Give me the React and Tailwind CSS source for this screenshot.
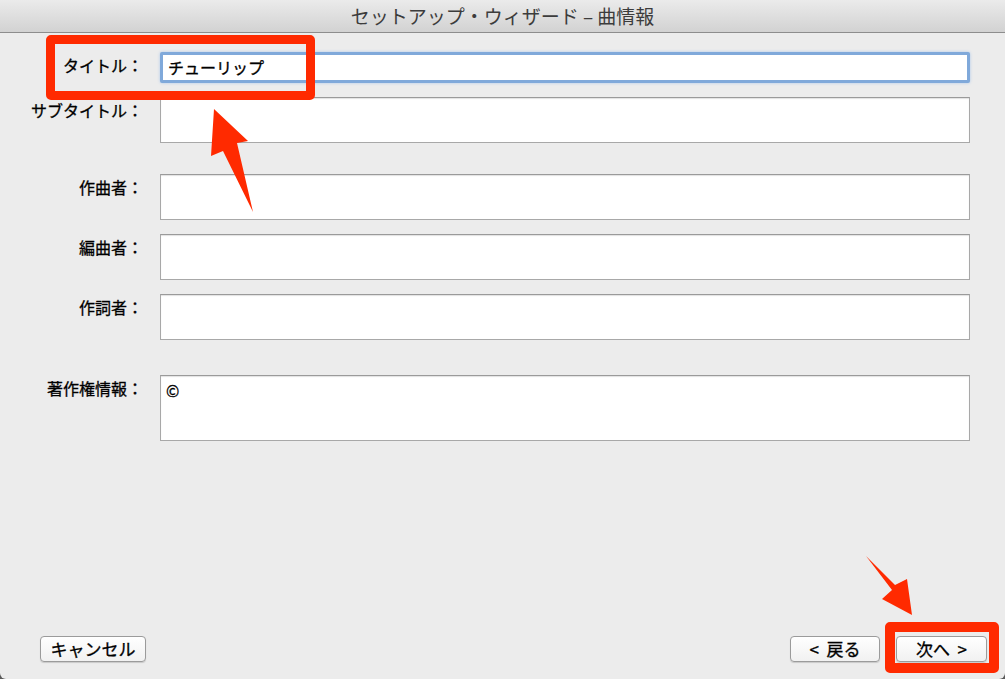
import React from "react";

const FONT = { fontFamily: '"Noto Sans CJK JP", "Noto Sans", sans-serif' };

const FIELDS = [
  { label: "タイトル：", value: "チューリップ", h: "h-[31px]", mt: "mt-[19px]", focused: true },
  { label: "サブタイトル：", value: "", h: "h-[46px]", mt: "mt-[14px]" },
  { label: "作曲者：", value: "", h: "h-[46px]", mt: "mt-[31px]" },
  { label: "編曲者：", value: "", h: "h-[46px]", mt: "mt-[14px]" },
  { label: "作詞者：", value: "", h: "h-[46px]", mt: "mt-[14px]" },
  { label: "著作権情報：", value: "©", h: "h-[66px]", mt: "mt-[35px]" },
];

function Field({ label, value, h, mt, focused }) {
  return (
    <div className={`flex items-start ${mt}`}>
      <div className="w-[143px] shrink-0 pt-[2px] text-right text-[16px] leading-[22px] text-black [-webkit-text-stroke:0.3px_black]">{label}</div>
      <div
        className={`ml-[17px] w-[810px] ${h} bg-white px-[5px] text-[16px] leading-[22px] text-black [-webkit-text-stroke:0.3px_black] ${
          focused
            ? "border-[3px] border-[#80a9da] rounded-[2px] pt-[1px] shadow-[0_0_3px_#a9c7ea]"
            : "border border-[#a8a8a8] border-t-[#9a9a9a] pt-[3px] shadow-[inset_0_1px_1px_rgba(0,0,0,0.12)]"
        }`}
      >
        {value}
      </div>
    </div>
  );
}

function Button({ children, w }) {
  return (
    <button
      type="button"
      className={`${w} h-[26px] rounded-[4px] border border-[#9b9b9b] bg-gradient-to-b from-white to-[#f1f1f1] text-[17px] leading-[22px] text-black [-webkit-text-stroke:0.3px_black] shadow-[0_1px_1px_rgba(0,0,0,0.15)]`}
    >
      {children}
    </button>
  );
}

export default function App() {
  return (
    <div className="h-[679px] w-[1005px] overflow-hidden bg-[#5a5a5a]" style={FONT}>
      <div className="relative flex h-full flex-col rounded-b-[6px] bg-[#ececec]">
        <div className="flex h-[33px] shrink-0 items-center justify-center border-b border-[#8d8d8d] bg-gradient-to-b from-[#ebebeb] to-[#d2d2d2] text-[19px] text-[#3c3c3c]">
          セットアップ・ウィザード – 曲情報
        </div>

        <div className="flex flex-col">
          {FIELDS.map((f) => (
            <Field key={f.label} {...f} />
          ))}
        </div>

        <div className="mt-auto mb-[17px] flex items-center pl-[40px] pr-[18px]">
          <Button w="w-[106px]">キャンセル</Button>
          <div className="ml-auto flex gap-[16px]">
            <Button w="w-[90px]">&lt;&nbsp;&nbsp;戻る</Button>
            <Button w="w-[91px]">次へ&nbsp;&nbsp;&gt;</Button>
          </div>
        </div>

        {/* annotation overlays */}
        <div className="absolute left-[46px] top-[35px] h-[65px] w-[269px] rounded-[5px] border-[9px] border-[#ff2a00]" />
        <div className="absolute left-[885px] top-[622px] h-[51px] w-[114px] rounded-[5px] border-[10px] border-[#ff2a00]" />
        <svg className="absolute left-0 top-0" width="1005" height="679" viewBox="0 0 1005 679">
          <polygon points="214,109 248,141 237,143 253,212 223,151 211,156" fill="#ff2a00" />
          <polygon points="866,556 895,585 907,579 912,615 882,599 892,590" fill="#ff2a00" />
        </svg>
      </div>
    </div>
  );
}
